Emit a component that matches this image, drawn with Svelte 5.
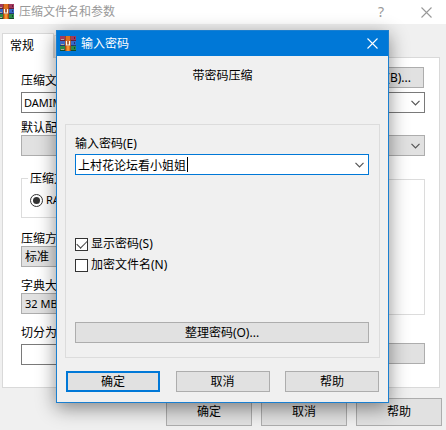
<script lang="ts">
	let password = $state('上村花论坛看小姐姐');
	let archive = $state('DAMIM');
	let volume = $state('');
	let showPassword = $state(true);
	let encryptNames = $state(false);

	const actions = ['确定', '取消', '帮助'];

	// Book covers, top to bottom
	const books = [
		{ y: 0, fill: '#a3395c', edge: '#64203c' },
		{ y: 5, fill: '#3867c4', edge: '#24386f' },
		{ y: 10, fill: '#2d8b48', edge: '#164c2a' }
	];
</script>

{#snippet logo()}
	<svg class="logo" viewBox="0 0 16 16" width="16" height="16" aria-hidden="true">
		{#each books as book}
			<rect x="0" y={book.y} width="16" height="5" fill={book.fill} />
			<rect x="0" y={book.y + 4} width="16" height="1" fill={book.edge} />
			<rect x="1" y={book.y + 3} width="3" height="1" fill="#b9a79a" />
			<rect x="14" y={book.y + 1} width="1" height="2" fill={book.edge} />
		{/each}
		<rect x="5" y="0" width="6" height="15" fill="#e0701f" />
		<rect x="5" y="0" width="1" height="15" fill="#a04a18" />
		<rect x="10" y="0" width="1" height="15" fill="#a04a18" />
		<path d="M5 5h6v5H5z" fill="#a8522c" />
		<path d="M6.500 5v4h3V5" fill="none" stroke="#fff6e6" stroke-width="1.200" />
		<path d="M7 10h2v5H7z" fill="#f5962e" />
	</svg>
{/snippet}

{#snippet cross()}
	<svg viewBox="0 0 11 11" width="11" height="11" aria-hidden="true">
		<path d="M.5.5l10 10M10.500.5l-10 10" fill="none" stroke="currentColor" stroke-width="1.100" />
	</svg>
{/snippet}

{#snippet chevron()}
	<svg viewBox="0 0 9 6" width="9" height="6" aria-hidden="true">
		<path d="M.5.800l4 4 4-4" fill="none" stroke="#555" stroke-width="1.200" />
	</svg>
{/snippet}

<main class="window">
	<header class="titlebar">
		{@render logo()}
		<span class="title">压缩文件名和参数</span>
		<button class="icon-button help">?</button>
		<button class="icon-button" aria-label="close">{@render cross()}</button>
	</header>

	<nav class="tabs">
		<button class="tab active">常规</button>
		<button class="tab" aria-label="tab"></button>
	</nav>

	<section class="panel">
		<div class="row top">
			<label for="archive">压缩文</label>
			<button class="push browse">(B)...</button>
		</div>
		<div class="combo">
			<input id="archive" class="latin" bind:value={archive} />
			<button class="drop" aria-label="list">{@render chevron()}</button>
		</div>

		<label class="profile-label" for="profile">默认配</label>
		<div class="row profiles">
			<button class="push" id="profile"></button>
			<button class="push select" aria-label="list">{@render chevron()}</button>
		</div>

		<div class="columns">
			<div class="column">
				<fieldset class="format">
					<legend>压缩文</legend>
					<label class="check latin"><input type="radio" name="format" checked />RAR</label>
				</fieldset>

				<label for="method">压缩方</label>
				<select id="method">
					<option>标准</option>
				</select>

				<label for="dictionary">字典大</label>
				<select id="dictionary" class="latin">
					<option>32 MB</option>
				</select>

				<label for="volume">切分为</label>
				<input id="volume" class="volume" bind:value={volume} />
			</div>
			<div class="column">
				<fieldset class="options"></fieldset>
				<button class="push" aria-label="more"></button>
			</div>
		</div>
	</section>

	<footer class="window-actions">
		{#each actions as action}
			<button class="push">{action}</button>
		{/each}
	</footer>
</main>

<div class="dialog" role="dialog" aria-labelledby="dialog-title">
	<header class="titlebar">
		{@render logo()}
		<span class="title" id="dialog-title">输入密码</span>
		<button class="icon-button" aria-label="close">{@render cross()}</button>
	</header>

	<p class="heading">带密码压缩</p>

	<section class="group">
		<label for="password">输入密码(E)</label>
		<div class="combo focused">
			<div class="entry">
				<input id="password" bind:value={password} />
				<span class="caret"></span>
			</div>
			<button class="drop" aria-label="list">{@render chevron()}</button>
		</div>

		<div class="checks">
			<label class="check"><input type="checkbox" bind:checked={showPassword} />显示密码(S)</label>
			<label class="check"><input type="checkbox" bind:checked={encryptNames} />加密文件名(N)</label>
		</div>

		<button class="push organize">整理密码(O)...</button>
	</section>

	<footer class="dialog-actions">
		{#each actions as action, i}
			<button class="push" class:default={i === 0}>{action}</button>
		{/each}
	</footer>
</div>

<style>
	:global(body) {
		background: #f0f0f0;
	}

	.window,
	.dialog {
		font: 12px/16px 'Noto Sans', 'Noto Sans CJK SC', sans-serif;
		color: #000;
	}

	.window *,
	.dialog * {
		box-sizing: border-box;
	}

	button,
	input,
	select {
		margin: 0;
		padding: 0;
		font: inherit;
		color: inherit;
		border-radius: 0;
		outline: none;
	}

	svg {
		display: block;
	}

	label {
		display: block;
		line-height: 18px;
		white-space: nowrap;
	}

	.latin {
		font-size: 11px;
	}

	.titlebar {
		display: flex;
		align-items: center;
		background: #fff;
		color: #999;
		height: 24px;
		padding-right: 14px;
	}

	.logo {
		flex: none;
	}

	.title {
		flex: 1;
		margin-left: 5px;
		white-space: nowrap;
	}

	.window .titlebar .logo {
		margin-left: -2px;
	}

	.icon-button {
		border: 0;
		background: none;
	}

	.help {
		margin-right: 37px;
		font-size: 14px;
	}

	/* tab strip and page */
	.tabs {
		display: flex;
		align-items: flex-end;
		padding: 9px 0 0 2px;
	}

	.tab {
		width: 60px;
		height: 22px;
		border: 1px solid #d9d9d9;
		border-bottom: 0;
		background: #f0f0f0;
	}

	.tab.active {
		position: relative;
		width: 52px;
		height: 25px;
		margin-bottom: -1px;
		padding-right: 12px;
		background: #fff;
	}

	.panel {
		margin: 0 6px 0 2px;
		padding: 9px 14px 22px 18px;
		border: 1px solid #d9d9d9;
		background: #fff;
	}

	.row {
		display: flex;
		justify-content: space-between;
	}

	.top {
		align-items: flex-end;
		height: 23px;
		margin-bottom: 2px;
	}

	.push {
		height: 21px;
		border: 1px solid #adadad;
		background: #e1e1e1;
		text-align: center;
	}

	.browse {
		align-self: flex-start;
		width: 88px;
		padding-right: 12px;
		margin-right: 1px;
		text-align: right;
	}

	.combo {
		display: flex;
		height: 21px;
		border: 1px solid #7a7a7a;
		background: #fff;
	}

	.combo input {
		width: 100%;
		height: 100%;
		border: 0;
		padding-left: 2px;
		background: none;
	}

	.drop {
		display: grid;
		place-items: center;
		flex: none;
		width: 17px;
		border: 0;
		background: none;
	}

	.profile-label {
		margin-top: 6px;
	}

	.profiles {
		margin-top: -2px;
	}

	.profiles .push {
		width: 120px;
	}

	.select {
		display: flex;
		align-items: center;
		justify-content: flex-end;
		padding-right: 4px;
	}

	.columns {
		display: grid;
		grid-template-columns: 1fr 1fr;
		gap: 12px;
		margin-top: 23px;
	}

	.column {
		display: flex;
		flex-direction: column;
	}

	.column > label {
		margin-bottom: -2px;
	}

	fieldset {
		margin: 0;
		border: 1px solid #dcdcdc;
	}

	.format {
		height: 48px;
		margin: -9px 0 12px;
		padding: 4px 8px;
	}

	legend {
		padding: 1px 2px 0;
		margin-left: -2px;
	}

	.options {
		height: 136px;
		margin-bottom: 28px;
	}

	select,
	.volume {
		height: 21px;
		margin-bottom: 10px;
		padding: 0 3px;
		border: 1px solid #adadad;
		background: #e1e1e1;
		appearance: none;
	}

	.volume {
		margin: 4px 0 0;
		border-color: #7a7a7a;
		background: #fff;
	}

	.window-actions {
		display: flex;
		justify-content: flex-end;
		gap: 9px;
		padding: 10px 4px 5px;
	}

	.window-actions .push {
		width: 86px;
		height: 28px;
	}

	.check {
		display: flex;
		align-items: center;
		gap: 3px;
	}

	.check input {
		flex: none;
		display: grid;
		place-items: center;
		width: 13px;
		height: 13px;
		border: 1px solid #333;
		background: #fff;
		appearance: none;
	}

	.check input[type='radio'] {
		border-radius: 50%;
	}

	.check input[type='radio']:checked::after {
		content: '';
		width: 7px;
		height: 7px;
		border-radius: 50%;
		background: #333;
	}

	.check input[type='checkbox']:checked::after {
		content: '';
		width: 9px;
		height: 5px;
		border: solid #444;
		border-width: 0 0 1px 1px;
		transform: translateY(-1px) rotate(-45deg);
	}

	/* password dialog, over the window */
	.dialog {
		position: absolute;
		top: 30px;
		left: 56px;
		right: 57px;
		border: 1px solid #1a7fd0;
		background: #f0f0f0;
		box-shadow: 0 5px 18px rgba(0, 0, 0, 0.45);
	}

	.dialog .titlebar {
		height: 25px;
		padding: 0 10px 0 3px;
		background: #0078d7;
		color: #fff;
	}

	.heading {
		margin: 12px 0 40px;
		text-align: center;
	}

	.group {
		margin: 0 8px;
		padding: 10px 10px 14px 9px;
		border: 1px solid #dcdcdc;
	}

	.focused {
		margin-top: 1px;
		border-color: #0078d7;
	}

	.entry {
		position: relative;
		flex: 1;
	}

	.caret {
		position: absolute;
		top: 2px;
		left: 111px;
		width: 1px;
		height: 15px;
		background: #000;
	}

	.checks {
		display: grid;
		gap: 3px;
		margin: 60px 0 48px;
	}

	.organize {
		display: block;
		width: 100%;
	}

	.dialog-actions {
		display: flex;
		justify-content: space-between;
		padding: 13px 9px 10px;
	}

	.dialog-actions .push {
		width: 94px;
	}

	.dialog-actions .default {
		border: 2px solid #0078d7;
	}
</style>
